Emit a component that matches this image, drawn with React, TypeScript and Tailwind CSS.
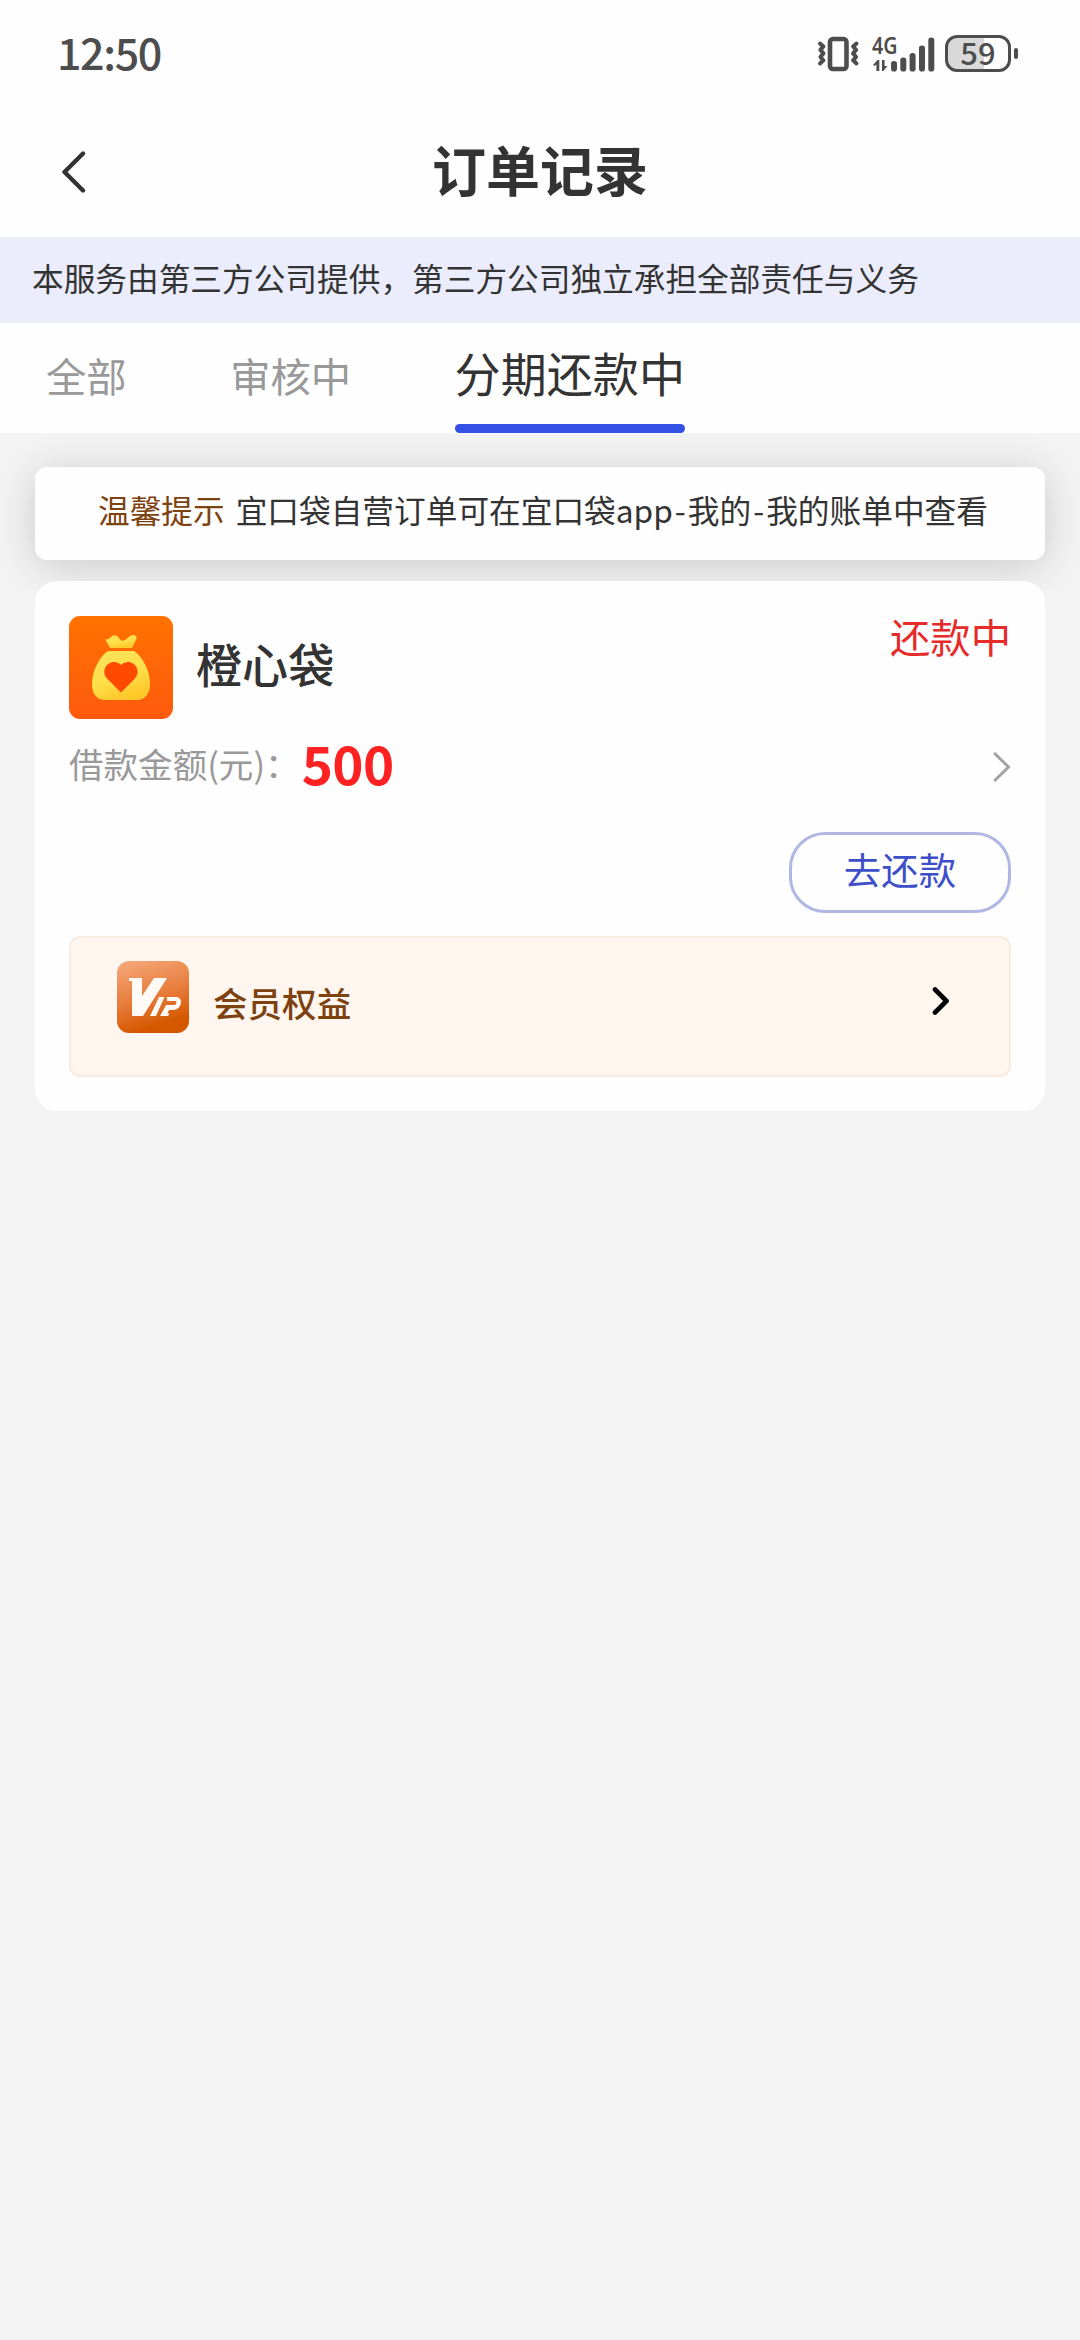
const tabs = [
  { label: '全部', active: false },
  { label: '审核中', active: false },
  { label: '分期还款中', active: true },
]

function VibrateIcon() {
  return (
    <svg className="h-[36px] w-[44px]" viewBox="0 0 44 36" fill="none" stroke="#4d4d4d">
      <rect x="13" y="3" width="16.5" height="30" rx="3" strokeWidth="4.6" />
      <path d="M3 7.5l3.4 3-3 3.4 3 3.5-3 3.6 3 3.3L3 27.5" strokeWidth="4" strokeLinejoin="round" strokeLinecap="round" />
      <path d="M39.5 7.5l-3.4 3 3 3.4-3 3.5 3 3.6-3 3.3 3.4 3.2" strokeWidth="4" strokeLinejoin="round" strokeLinecap="round" />
    </svg>
  )
}

function SignalIcon() {
  return (
    <svg className="h-[36px] w-[64px] overflow-visible" viewBox="0 0 64 36" fill="#4d4d4d">
      <text x="0" y="18" fontSize="23.5" fontWeight="600" textLength="25.5" lengthAdjust="spacingAndGlyphs" fontFamily="Noto Sans, sans-serif">
        4G
      </text>
      <path d="M1 29l4.5-5h1.8v11H4.4v-6.5L2.3 30zM10 24h2.6v6h2.8l-4 5H10z" />
      <rect x="19" y="25" width="6" height="10.5" rx="2.8" />
      <rect x="28.3" y="21.5" width="6" height="14" rx="2.8" />
      <rect x="37.6" y="17" width="6" height="18.5" rx="2.8" />
      <rect x="47" y="9.5" width="6" height="26" rx="2.8" />
      <rect x="56.3" y="1.5" width="6" height="34" rx="2.8" />
    </svg>
  )
}

function Battery() {
  return (
    <div className="flex items-center gap-[3px]">
      <div className="flex h-[37px] w-[66px] items-center justify-center rounded-[12px] border-[3px] border-[#4d4d4d] bg-linear-to-r from-[#d9d9d9] from-60% to-white to-60% pb-[5px] text-[31px] leading-none font-medium text-[#4d4d4d]">
        59
      </div>
      <div className="h-[11px] w-[4px] rounded-full bg-[#4d4d4d]" />
    </div>
  )
}

function StatusBar() {
  return (
    <div className="flex h-[107px] items-center justify-between pr-[62px] pl-[57px]">
      <span className="pb-[5px] text-[43px] leading-none font-medium tracking-[-1.4px] text-[#4d4d4d]">12:50</span>
      <div className="flex items-center">
        <VibrateIcon />
        <div className="ml-[11px]">
          <SignalIcon />
        </div>
        <div className="ml-[9px]">
          <Battery />
        </div>
      </div>
    </div>
  )
}

function MoneyBagLogo() {
  return (
    <svg className="h-[103px] w-[104px]" viewBox="0 0 104 103">
      <defs>
        <linearGradient id="bagBg" x1="0" y1="0" x2="0" y2="1">
          <stop offset="0" stopColor="#ff7200" />
          <stop offset="1" stopColor="#ff5a0e" />
        </linearGradient>
        <linearGradient id="bag" x1="0" y1="0" x2="0.4" y2="1">
          <stop offset="0" stopColor="#ffe15c" />
          <stop offset="0.6" stopColor="#ffe04a" />
          <stop offset="1" stopColor="#ffc92b" />
        </linearGradient>
      </defs>
      <rect width="104" height="103" rx="11" fill="url(#bagBg)" />
      <path d="M36 23c2 1 4 0 6-2 3-3 6-2 8 1s4 3.500 6 2c3-1 4-5 8-5s4 3 3 5l-4 8H41z" fill="url(#bag)" />
      <path d="M39 35h26c9 6 16 20 16 33 0 10-5 16-13 16H36c-8 0-13-6-13-16 0-13 7-27 16-33z" fill="url(#bag)" />
      <path d="M52 76.500L38.500 63c-9-9 3-23 13.500-14 10.500-9 22.500 5 13.500 14z" fill="#ff4a00" />
    </svg>
  )
}

function VipIcon() {
  return (
    <svg className="h-[72px] w-[72px]" viewBox="0 0 72 72">
      <defs>
        <linearGradient id="vipBg" x1="0.3" y1="0" x2="0.6" y2="1">
          <stop offset="0" stopColor="#f4a374" />
          <stop offset="0.5" stopColor="#e67c3a" />
          <stop offset="0.9" stopColor="#d55800" />
        </linearGradient>
      </defs>
      <rect width="72" height="72" rx="12" fill="url(#vipBg)" />
      <path d="M12 17h13v18l12-18h13L26 55H15V20h-3z" fill="#fffaf5" />
      <path d="M42 36h5.500l-8.500 19h-6zM50 36h9c8 0 6 13-3 13h-4l-1.500 3.500h2L51 55h-8l6-11h8c2.500 0 3.500-4 1-4h-8z" fill="#fffaf5" />
    </svg>
  )
}

function TabBar() {
  return (
    <nav className="relative z-10 flex h-[110px] gap-[103.5px] bg-[#fefefe] pl-[46px]">
      {tabs.map((tab) => (
        <div key={tab.label} className="flex h-full flex-col justify-between">
          <span
            className={
              tab.active
                ? 'text-[46.08px] leading-[98px] whitespace-nowrap text-[#333]'
                : 'text-[40.32px] leading-[103px] whitespace-nowrap text-[#999]'
            }
          >
            {tab.label}
          </span>
          {tab.active && <div className="h-[9px] shrink-0 rounded-full bg-[#3351e5]" />}
        </div>
      ))}
    </nav>
  )
}

function OrderCard() {
  return (
    <section className="relative mt-[21px] h-[530px] rounded-[22px] bg-[#fefefe] px-[34px] pt-[35px]">
      <div className="flex h-[103px] items-start">
        <MoneyBagLogo />
        <h2 className="ml-[23px] text-[46.08px] leading-[94px] font-medium text-[#333]">橙心袋</h2>
        <span className="ml-auto text-[40.32px] leading-[40px] text-[#e62b2b]">还款中</span>
      </div>

      <div className="mt-[14px] flex h-[64px] items-center">
        <span className="pb-[3px] text-[34.56px] leading-none text-[#999]">借款金额(元)：</span>
        <span className="ml-[2px] pb-[6px] text-[53px] leading-none font-bold tracking-[-0.6px] text-[#ff2222]">500</span>
        <svg className="mt-[3px] ml-auto h-[30px] w-[18px]" viewBox="0 0 18 30" fill="none" stroke="#a3a3a3" strokeWidth="3">
          <path d="M1.2 1L15.5 15 1.2 29" />
        </svg>
      </div>

      <div className="mt-[35px] flex justify-end">
        <button className="h-[81px] w-[222px] rounded-[36px] border-[3px] border-[#b0b7e2] pb-[6px] text-[37.44px] leading-none text-[#3d4ec9]">
          去还款
        </button>
      </div>

      <div className="mt-[23px] flex h-[141px] rounded-[11px] border-2 border-[#f8ece1] bg-[#fff6f0] pt-[23px] pr-[59px] pl-[46px]">
        <VipIcon />
        <span className="ml-[24px] text-[34.56px] leading-[82px] font-medium text-[#7d420f]">会员权益</span>
        <svg className="mt-[26px] ml-auto h-[28px] w-[18px]" viewBox="0 0 18 28" fill="none" stroke="#000" strokeWidth="4.6" strokeLinecap="round" strokeLinejoin="round">
          <path d="M3 2.5L14.5 14 3 25.5" />
        </svg>
      </div>
    </section>
  )
}

export default function App() {
  return (
    <div className="h-[2340px] w-[1080px] overflow-hidden bg-[#f3f3f3] font-['Noto_Sans_CJK_SC',sans-serif]">
      <header className="h-[237px] bg-[#fefefe]">
        <StatusBar />
        <div className="grid h-[130px] grid-cols-[1fr_auto_1fr] items-center">
          <svg className="ml-[61px] h-[42px] w-[26px]" viewBox="0 0 26 42" fill="none" stroke="#333" strokeWidth="4.4" strokeLinecap="round" strokeLinejoin="round">
            <path d="M22 2.5L3.5 21 22 39.5" />
          </svg>
          <h1 className="pb-[6px] text-[54px] leading-none font-bold text-[#333]">订单记录</h1>
        </div>
      </header>

      <p className="h-[86px] bg-[#ebedfc] pl-[32px] text-[31.68px] leading-[81px] text-[#333]">
        本服务由第三方公司提供，第三方公司独立承担全部责任与义务
      </p>

      <TabBar />

      <main className="px-[35px] pt-[34px]">
        <div className="flex h-[93px] items-center rounded-[12px] bg-[#fefefe] pb-[7px] pl-[63px] text-[31.68px] leading-none whitespace-nowrap shadow-[0_6px_40px_rgba(0,0,0,0.17)]">
          <span className="text-[#7d420f]">温馨提示</span>
          <span className="ml-[11px] text-[#333]">
            宜口袋自营订单可在宜口袋app<span className="px-[2px]">-</span>我的<span className="px-[2px]">-</span>我的账单中查看
          </span>
        </div>
        <OrderCard />
      </main>
    </div>
  )
}
